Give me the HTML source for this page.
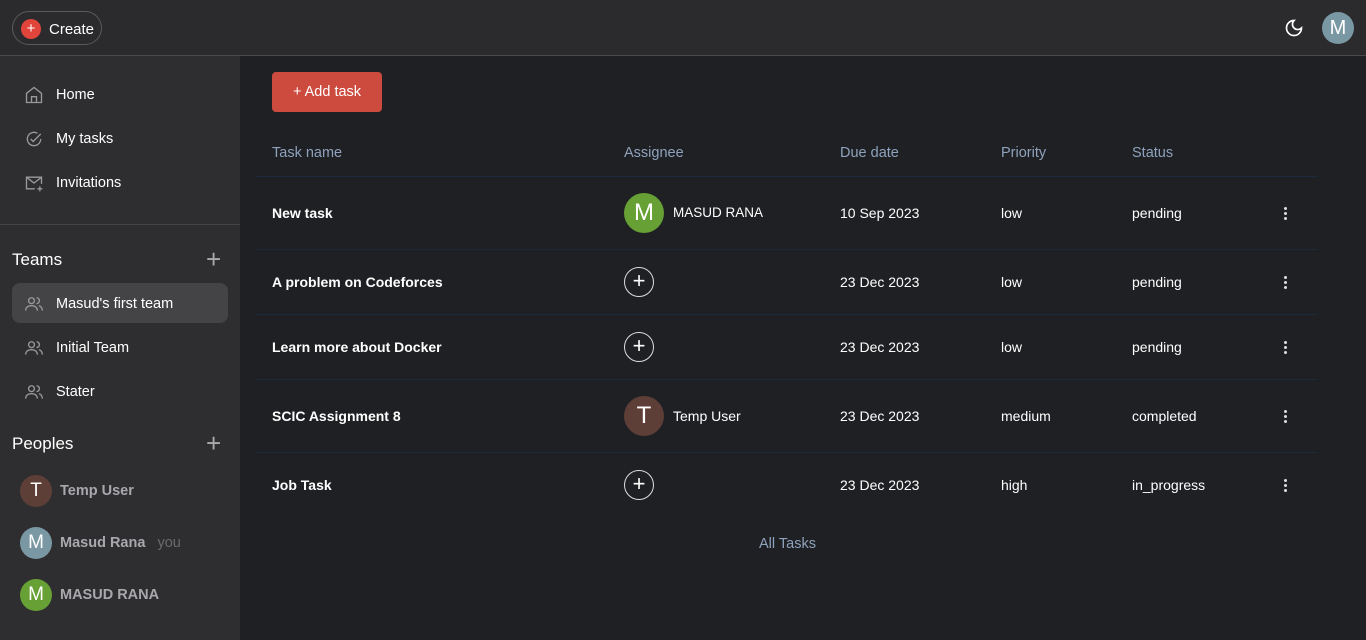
<!DOCTYPE html>
<html><head><meta charset="utf-8"><style>
*{box-sizing:border-box;margin:0;padding:0}
body{width:1366px;height:640px;overflow:hidden;background:#1f2023;font-family:"Liberation Sans",sans-serif;color:#fff;position:relative}
.top{position:absolute;left:0;top:0;width:1366px;height:56px;background:#2b2b2d;border-bottom:1px solid #4a4a4c}
.create{position:absolute;left:12px;top:11px;width:90px;height:34px;border:1px solid #5a5a5c;border-radius:17px}
.create .dot{position:absolute;left:8px;top:7px;width:20px;height:20px;border-radius:50%;background:#e0443a;color:#fff;font-size:15px;line-height:20px;text-align:center}
.create span{position:absolute;left:36px;top:9px;font-size:15px}
.side{position:absolute;left:0;top:56px;width:240px;height:584px;background:#2e2e30}
.nav{position:absolute;left:24px;font-size:14.5px;display:flex;align-items:center}
.nav svg{width:20px;height:20px;margin-right:12px}
.hr{position:absolute;left:0;top:224px;width:240px;height:1px;background:#444}
.h{position:absolute;left:12px;font-size:17px}
.plus{position:absolute;left:206px;font-size:26px;color:#aaa;font-weight:300;line-height:20px}
.sel{position:absolute;left:12px;top:283px;width:216px;height:40px;background:#444446;border-radius:8px}
.av{position:absolute;border-radius:50%;text-align:center;color:#fff}
.pn{position:absolute;left:60px;font-size:14.5px;color:#a8a8ad;font-weight:bold}
.btn{position:absolute;left:272px;top:72px;width:110px;height:40px;background:#cd4a3e;border-radius:4px;font-size:14.5px;line-height:40px;text-align:center}
.th{position:absolute;top:145px;font-size:14.5px;color:#8ea2bd}
.sep{position:absolute;left:256px;width:1062px;height:1px;background:#1c2a3e}
.td{position:absolute;font-size:14px}
.b{font-weight:bold}
.circ{position:absolute;left:624px;width:30px;height:30px;border:1px solid #ddd;border-radius:50%;text-align:center;line-height:26px;font-size:22px;font-weight:300}
.dots{position:absolute;left:1284px;width:4px}
.dots i{display:block;width:3px;height:3px;background:#ddd;border-radius:50%;margin-bottom:2px}
</style></head><body>
<div class="top">
<div class="create"><div class="dot">+</div><span>Create</span></div>
<svg style="position:absolute;left:1284px;top:18px" width="20" height="20" viewBox="0 0 24 24" fill="none" stroke="#fff" stroke-width="2"><path d="M12 3a6 6 0 0 0 9 9 9 9 0 1 1-9-9z"/></svg>
<div class="av" style="left:1322px;top:12px;width:32px;height:32px;background:#7a97a4;font-size:20px;line-height:32px">M</div>
</div>
<div class="side"></div>
<div class="nav" style="top:85px"><svg viewBox="0 0 24 24" fill="none" stroke="#999" stroke-width="1.6"><path d="M3 10l9-7 9 7v11H3z"/><path d="M9 21v-7h6v7"/></svg>Home</div>
<div class="nav" style="top:129px"><svg viewBox="0 0 24 24" fill="none" stroke="#999" stroke-width="1.6"><path d="M20 12a8 8 0 1 1-4-6.9"/><path d="M8 12l3 3 9-9"/></svg>My tasks</div>
<div class="nav" style="top:173px"><svg viewBox="0 0 24 24" fill="none" stroke="#999" stroke-width="1.6"><path d="M13 19H3V5h18v8"/><path d="M3 5l9 7 9-7"/><path d="M19 16v6M16 19h6"/></svg>Invitations</div>
<div class="hr"></div>
<div class="h" style="top:250px">Teams</div><div class="plus" style="top:249px">+</div>
<div class="sel"></div>
<div class="nav" style="top:294px"><svg viewBox="0 0 24 24" fill="none" stroke="#999" stroke-width="1.6"><circle cx="9" cy="8" r="3.5"/><path d="M2 20c0-4 3-6 7-6s7 2 7 6"/><path d="M15 4.5a3.5 3.5 0 0 1 0 7M18 14c2 .7 4 2.5 4 6"/></svg>Masud's first team</div>
<div class="nav" style="top:338px"><svg viewBox="0 0 24 24" fill="none" stroke="#999" stroke-width="1.6"><circle cx="9" cy="8" r="3.5"/><path d="M2 20c0-4 3-6 7-6s7 2 7 6"/><path d="M15 4.5a3.5 3.5 0 0 1 0 7M18 14c2 .7 4 2.5 4 6"/></svg>Initial Team</div>
<div class="nav" style="top:382px"><svg viewBox="0 0 24 24" fill="none" stroke="#999" stroke-width="1.6"><circle cx="9" cy="8" r="3.5"/><path d="M2 20c0-4 3-6 7-6s7 2 7 6"/><path d="M15 4.5a3.5 3.5 0 0 1 0 7M18 14c2 .7 4 2.5 4 6"/></svg>Stater</div>
<div class="h" style="top:434px">Peoples</div><div class="plus" style="top:433px">+</div>
<div class="av" style="left:20px;top:475px;width:32px;height:32px;background:#5d3f37;font-size:19px;line-height:32px">T</div><div class="pn" style="top:483px">Temp User</div>
<div class="av" style="left:20px;top:527px;width:32px;height:32px;background:#7a97a4;font-size:19px;line-height:32px">M</div><div class="pn" style="top:535px">Masud Rana <span style="font-weight:normal;color:#6a6a6e;margin-left:8px">you</span></div>
<div class="av" style="left:20px;top:579px;width:32px;height:32px;background:#67a034;font-size:19px;line-height:32px">M</div><div class="pn" style="top:587px">MASUD RANA</div>

<div class="btn">+ Add task</div>
<div class="th" style="left:272px">Task name</div><div class="th" style="left:624px">Assignee</div><div class="th" style="left:840px">Due date</div><div class="th" style="left:1001px">Priority</div><div class="th" style="left:1132px">Status</div>
<div class="sep" style="top:176px"></div><div class="sep" style="top:249px"></div><div class="sep" style="top:314px"></div><div class="sep" style="top:379px"></div><div class="sep" style="top:452px"></div>

<div class="td b" style="left:272px;top:205px">New task</div>
<div class="av" style="left:624px;top:193px;width:40px;height:40px;background:#67a034;font-size:24px;line-height:40px">M</div><div class="td" style="left:673px;top:205px;font-size:13.5px">MASUD RANA</div>
<div class="td" style="left:840px;top:205px">10 Sep 2023</div><div class="td" style="left:1001px;top:205px">low</div><div class="td" style="left:1132px;top:205px">pending</div>
<div class="dots" style="top:207px"><i></i><i></i><i></i></div>

<div class="td b" style="left:272px;top:274px">A problem on Codeforces</div>
<div class="circ" style="top:267px">+</div>
<div class="td" style="left:840px;top:274px">23 Dec 2023</div><div class="td" style="left:1001px;top:274px">low</div><div class="td" style="left:1132px;top:274px">pending</div>
<div class="dots" style="top:276px"><i></i><i></i><i></i></div>

<div class="td b" style="left:272px;top:339px">Learn more about Docker</div>
<div class="circ" style="top:332px">+</div>
<div class="td" style="left:840px;top:339px">23 Dec 2023</div><div class="td" style="left:1001px;top:339px">low</div><div class="td" style="left:1132px;top:339px">pending</div>
<div class="dots" style="top:341px"><i></i><i></i><i></i></div>

<div class="td b" style="left:272px;top:408px">SCIC Assignment 8</div>
<div class="av" style="left:624px;top:396px;width:40px;height:40px;background:#5d3f37;font-size:24px;line-height:40px">T</div><div class="td" style="left:673px;top:408px">Temp User</div>
<div class="td" style="left:840px;top:408px">23 Dec 2023</div><div class="td" style="left:1001px;top:408px">medium</div><div class="td" style="left:1132px;top:408px">completed</div>
<div class="dots" style="top:410px"><i></i><i></i><i></i></div>

<div class="td b" style="left:272px;top:477px">Job Task</div>
<div class="circ" style="top:470px">+</div>
<div class="td" style="left:840px;top:477px">23 Dec 2023</div><div class="td" style="left:1001px;top:477px">high</div><div class="td" style="left:1132px;top:477px">in_progress</div>
<div class="dots" style="top:479px"><i></i><i></i><i></i></div>

<div class="td" style="left:759px;top:536px;color:#8ea2bd;font-size:14.5px">All Tasks</div>
</body></html>
